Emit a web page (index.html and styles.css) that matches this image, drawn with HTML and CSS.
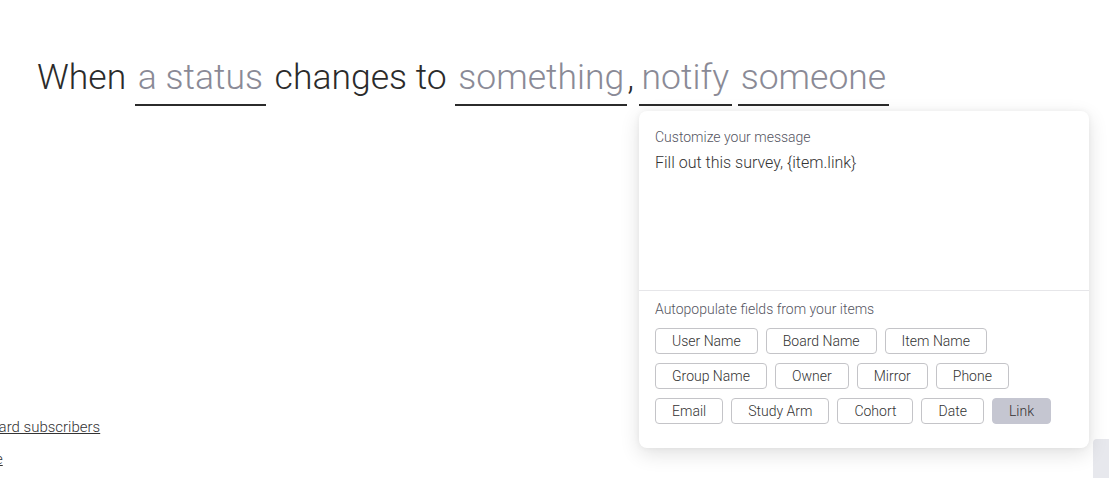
FILE: index.html
```html
<!DOCTYPE html>
<html>
<head>
<meta charset="utf-8">
<link rel="stylesheet" href="styles.css">
</head>
<body>
<div class="page">
  <h1 class="sentence">When <span class="slot">a status</span> changes to <span class="slot">something</span>, <span class="slot tight">notify</span> <span class="slot tighter">someone</span></h1>
  <div class="links">
    <a class="link first">Board subscribers</a>
    <a class="link second">Me</a>
  </div>
  <div class="side-tab"></div>
  <div class="popup">
    <div class="msg">
      <div class="label">Customize your message</div>
      <div class="msg-text">Fill out this survey, {item.link}</div>
    </div>
    <div class="fields">
      <div class="label">Autopopulate fields from your items</div>
      <div class="chips">
        <div class="row"><span class="chip">User Name</span><span class="chip">Board Name</span><span class="chip">Item Name</span></div>
        <div class="row"><span class="chip">Group Name</span><span class="chip">Owner</span><span class="chip">Mirror</span><span class="chip">Phone</span></div>
        <div class="row"><span class="chip">Email</span><span class="chip">Study Arm</span><span class="chip">Cohort</span><span class="chip">Date</span><span class="chip active">Link</span></div>
      </div>
    </div>
  </div>
</div>
</body>
</html>
```
FILE: styles.css
```css
html, body {
  margin: 0;
  padding: 0;
  background: #ffffff;
  overflow: hidden;
}
body {
  font-family: Roboto, "Liberation Sans", sans-serif;
  font-weight: 300;
  color: #2b2b2b;
  width: 1109px;
  height: 478px;
}
.page {
  position: relative;
  width: 1109px;
  height: 478px;
  overflow: hidden;
}
.sentence {
  margin: 0;
  padding: 53px 0 0 37px;
  font-size: 35.5px;
  font-weight: 300;
  line-height: 48px;
  color: #2b2b2b;
  white-space: nowrap;
}
.slot {
  display: inline-block;
  color: #8a8a96;
  padding: 0 3px 5px;
  border-bottom: 2px solid #2b2b2b;
  line-height: 44px;
}
.slot.tight { margin-left: -4px; }
.slot.tighter { margin-left: -3px; }
.links {
  display: flex;
  flex-direction: column;
  gap: 13px;
  margin-top: 312px;
  font-size: 15px;
}
.link {
  color: #333;
  text-decoration: underline;
  line-height: 19px;
  white-space: nowrap;
}
.first { margin-left: -19px; }
.second { margin-left: -18px; }
.side-tab {
  position: absolute;
  left: 1093px;
  top: 439px;
  width: 20px;
  height: 50px;
  background: #e7e8ed;
  border-radius: 4px 0 0 0;
}
.popup {
  position: absolute;
  left: 639px;
  top: 111px;
  width: 450px;
  height: 337px;
  background: #fff;
  border-radius: 8px;
  box-shadow: 0 6px 20px rgba(0, 0, 0, 0.12), 0 0 6px rgba(0, 0, 0, 0.05);
  display: flex;
  flex-direction: column;
}
.msg {
  height: 180px;
  padding: 18px 16px 0;
  box-sizing: border-box;
  border-bottom: 1px solid #e6e6e9;
}
.label {
  font-size: 14px;
  color: #55555f;
  line-height: 16px;
}
.msg-text {
  margin-top: 8px;
  font-size: 16px;
  color: #333;
  line-height: 20px;
}
.fields {
  padding: 10px 16px 0;
}
.chips {
  margin-top: 11px;
  display: flex;
  flex-direction: column;
  gap: 9px;
}
.row {
  display: flex;
  gap: 8px;
}
.chip {
  box-sizing: border-box;
  height: 26px;
  line-height: 24px;
  padding: 0 16px;
  border: 1px solid #c4c4c8;
  border-radius: 4px;
  font-size: 14px;
  color: #333;
  white-space: nowrap;
}
.chip.active {
  background: #c5c6d1;
  border-color: #c5c6d1;
}
```
